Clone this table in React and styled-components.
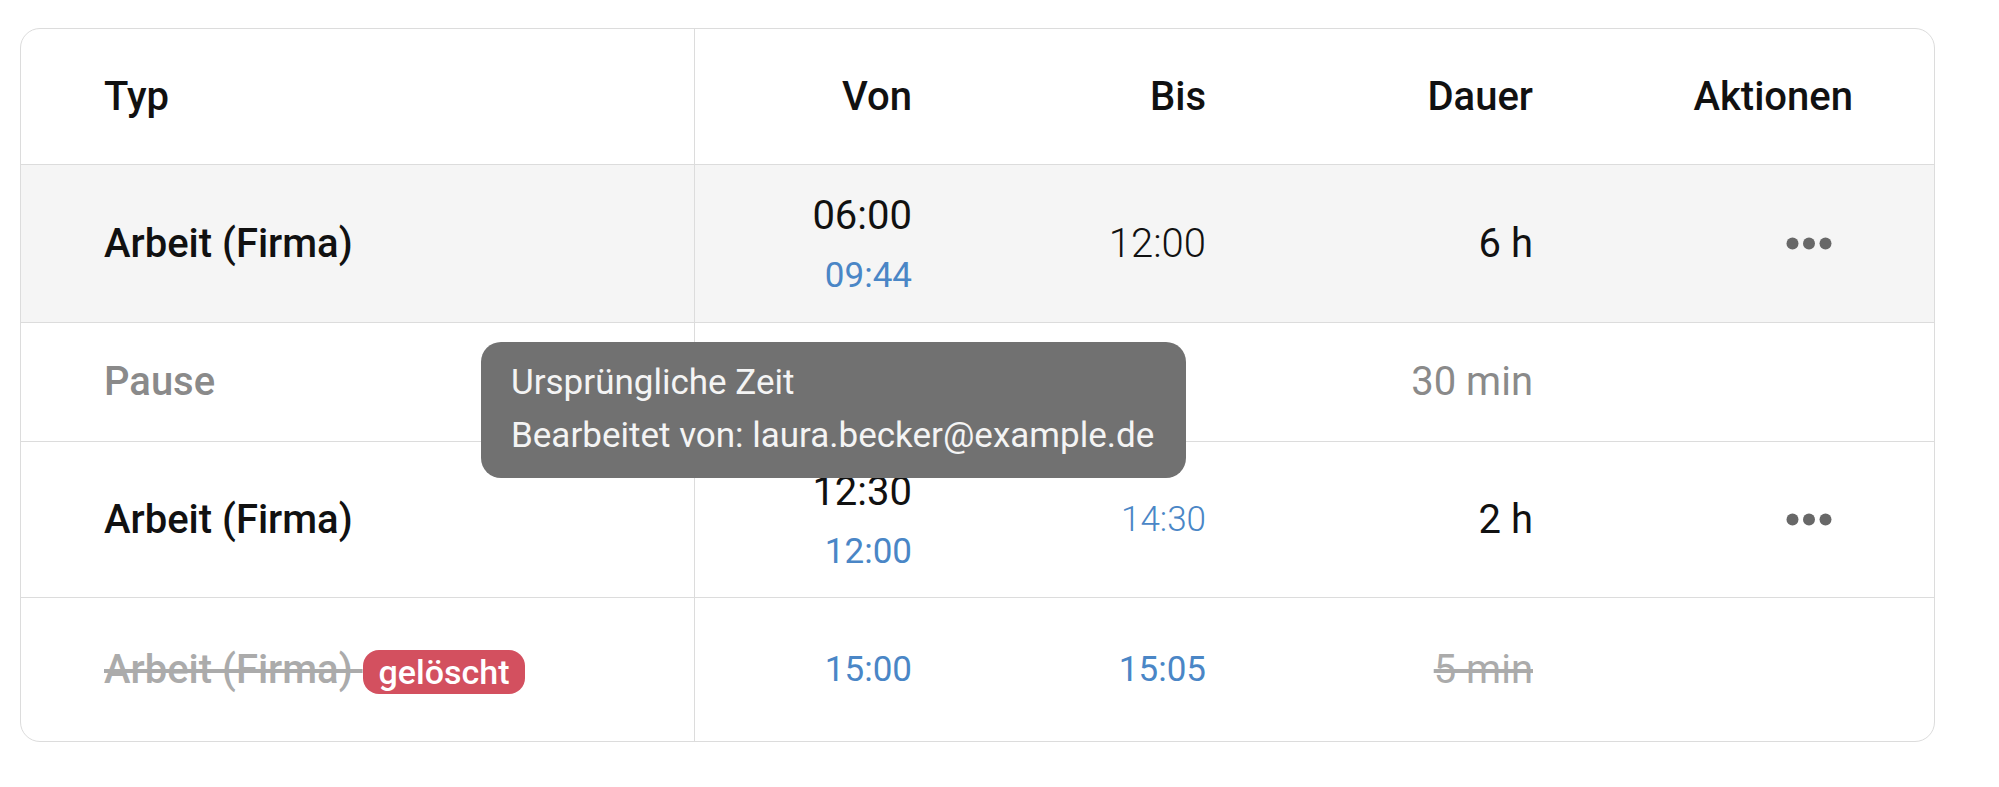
import React from "react";
import styled, { createGlobalStyle } from "styled-components";

const GlobalStyle = createGlobalStyle`
  body {
    margin: 0;
    background: #ffffff;
    font-family: Roboto, "Noto Sans", sans-serif;
    color: #111111;
  }
`;

const COLUMNS = "674px 298px 294px 327px 1fr";

const Page = styled.div`
  padding: 28px 0 40px 20px;
`;

const Card = styled.div`
  position: relative;
  width: 1915px;
  box-sizing: border-box;
  border: 1px solid #dcdcdc;
  border-radius: 20px;
  background: #ffffff;
`;

const Row = styled.div`
  display: grid;
  grid-template-columns: ${COLUMNS};
  height: ${(p) => p.$height}px;
  box-sizing: border-box;
  border-bottom: ${(p) => (p.$last ? "none" : "1px solid #dcdcdc")};
  background: ${(p) => (p.$highlight ? "#f5f5f5" : "transparent")};
  border-radius: ${(p) => (p.$first ? "20px 20px 0 0" : p.$last ? "0 0 20px 20px" : "0")};
`;

const Cell = styled.div`
  display: flex;
  flex-direction: ${(p) => (p.$first ? "row" : "column")};
  justify-content: ${(p) => (p.$first ? "flex-start" : "center")};
  align-items: ${(p) => (p.$first ? "center" : "flex-end")};
  padding: ${(p) => (p.$first ? "0 0 0 83px" : "0 81px 0 0")};
  border-right: ${(p) => (p.$first ? "1px solid #dcdcdc" : "none")};
  font-size: 40px;
  line-height: 56px;
  white-space: nowrap;
`;

const HeadLabel = styled.span`
  font-weight: 500;
  color: #111111;
`;

const TypeLabel = styled.span`
  white-space: pre;
  color: ${(p) => (p.$muted ? "#8a8a8a" : p.$deleted ? "#ababab" : "#111111")};
  text-decoration: ${(p) => (p.$deleted ? "line-through" : "none")};
  font-weight: 500;
`;

const Badge = styled.span`
  display: inline-block;
  height: 44px;
  line-height: 44px;
  padding: 0 16px;
  border-radius: 16px;
  background: #d3505f;
  color: #ffffff;
  font-size: 34px;
  font-weight: 500;
  margin-top: 4px;
`;

const Time = styled.span`
  display: block;
  font-size: ${(p) => (p.$small ? 35 : 40)}px;
  line-height: ${(p) => (p.$small ? 48 : 56)}px;
  margin-top: ${(p) => (p.$gap ? 8 : 0)}px;
  font-weight: ${(p) => p.$weight || 400};
  color: ${(p) => (p.$blue ? "#4a86c6" : "#111111")};
`;

const Duration = styled.span`
  font-weight: 400;
  color: ${(p) => (p.$muted ? "#8a8a8a" : p.$deleted ? "#ababab" : "#111111")};
  text-decoration: ${(p) => (p.$deleted ? "line-through" : "none")};
`;

const MenuButton = styled.button`
  display: flex;
  align-items: center;
  background: none;
  border: none;
  padding: 10px 22px;
  margin-right: -1px;
  cursor: pointer;
  color: #686868;
`;

const Tooltip = styled.div`
  position: absolute;
  left: 460px;
  top: 313px;
  padding: 14px 32px 16px 30px;
  border-radius: 20px;
  background: #717171;
  color: #f4f4f4;
  font-size: 35px;
  line-height: 53px;
  white-space: nowrap;
  z-index: 5;
`;

function Dots() {
  return (
    <svg width="46" height="13" viewBox="0 0 46 13">
      <circle cx="6.5" cy="6.5" r="6" fill="currentColor" />
      <circle cx="23" cy="6.5" r="6" fill="currentColor" />
      <circle cx="39.5" cy="6.5" r="6" fill="currentColor" />
    </svg>
  );
}

export default function App() {
  return (
    <>
      <GlobalStyle />
      <Page>
        <Card>
          <Row $height={136} $first>
            <Cell $first>
              <HeadLabel>Typ</HeadLabel>
            </Cell>
            <Cell><HeadLabel>Von</HeadLabel></Cell>
            <Cell><HeadLabel>Bis</HeadLabel></Cell>
            <Cell><HeadLabel>Dauer</HeadLabel></Cell>
            <Cell><HeadLabel>Aktionen</HeadLabel></Cell>
          </Row>

          <Row $height={158} $highlight>
            <Cell $first>
              <TypeLabel>Arbeit (Firma)</TypeLabel>
            </Cell>
            <Cell>
              <Time>06:00</Time>
              <Time $small $blue $gap>09:44</Time>
            </Cell>
            <Cell>
              <Time $weight={300}>12:00</Time>
            </Cell>
            <Cell>
              <Duration>6 h</Duration>
            </Cell>
            <Cell>
              <MenuButton aria-label="Aktionen">
                <Dots />
              </MenuButton>
            </Cell>
          </Row>

          <Row $height={119}>
            <Cell $first>
              <TypeLabel $muted>Pause</TypeLabel>
            </Cell>
            <Cell />
            <Cell />
            <Cell>
              <Duration $muted>30 min</Duration>
            </Cell>
            <Cell />
          </Row>

          <Row $height={156}>
            <Cell $first>
              <TypeLabel>Arbeit (Firma)</TypeLabel>
            </Cell>
            <Cell>
              <Time>12:30</Time>
              <Time $small $blue $gap>12:00</Time>
            </Cell>
            <Cell>
              <Time $small $blue $weight={300}>14:30</Time>
            </Cell>
            <Cell>
              <Duration>2 h</Duration>
            </Cell>
            <Cell>
              <MenuButton aria-label="Aktionen">
                <Dots />
              </MenuButton>
            </Cell>
          </Row>

          <Row $height={143} $last>
            <Cell $first>
              <TypeLabel $deleted>{"Arbeit (Firma) "}</TypeLabel>
              <Badge>gelöscht</Badge>
            </Cell>
            <Cell>
              <Time $small $blue>15:00</Time>
            </Cell>
            <Cell>
              <Time $small $blue>15:05</Time>
            </Cell>
            <Cell>
              <Duration $deleted>5 min</Duration>
            </Cell>
            <Cell />
          </Row>

          <Tooltip>
            Ursprüngliche Zeit
            <br />
            Bearbeitet von: laura.becker@example.de
          </Tooltip>
        </Card>
      </Page>
    </>
  );
}
